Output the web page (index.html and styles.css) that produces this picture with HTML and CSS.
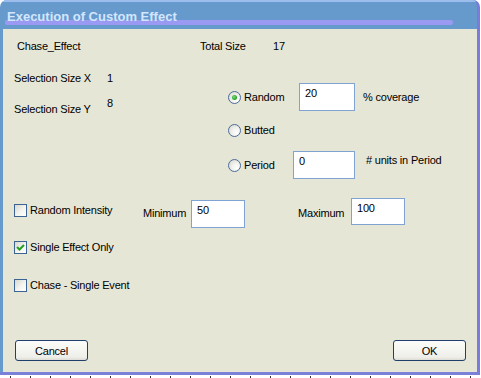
FILE: index.html
```html
<!DOCTYPE html>
<html lang="en">
<head>
  <meta charset="UTF-8">
  <title>Execution of Custom Effect</title>
  <link rel="stylesheet" href="styles.css">
</head>
<body>

  <div class="window">
    <div class="titlebar">
      <div class="title">Execution of Custom Effect</div>
      <div class="title-stripe"></div>
    </div>

    <div class="client">
      <!-- effect name and total -->
      <div class="head-row">
        <span class="effect-name">Chase_Effect</span>
        <span class="total-label">Total Size</span>
        <span>17</span>
      </div>

      <div class="middle">
        <div class="sizes">
          <div class="size-row">
            <span class="size-label">Selection Size X</span>
            <span>1</span>
          </div>
          <div class="size-row size-row-y">
            <span class="size-label">Selection Size Y</span>
            <span>8</span>
          </div>
        </div>

        <!-- distribution choice -->
        <div class="dist">
          <div class="dist-row">
            <label class="radio radio-random"><span class="radio-btn checked"></span>Random</label>
            <div class="field field-cov">20</div>
            <span class="unit">% coverage</span>
          </div>
          <div class="dist-row dist-butted">
            <label class="radio"><span class="radio-btn"></span>Butted</label>
          </div>
          <div class="dist-row dist-period">
            <label class="radio radio-period"><span class="radio-btn"></span>Period</label>
            <div class="field field-period">0</div>
            <span class="unit unit-period"># units in Period</span>
          </div>
        </div>
      </div>

      <div class="check-row intensity-row">
        <label class="check check-intensity"><span class="check-box"></span>Random Intensity</label>
        <span class="range-label">Minimum</span>
        <div class="field field-min">50</div>
        <span class="range-label range-max">Maximum</span>
        <div class="field field-max">100</div>
      </div>

      <div class="check-row single-row">
        <label class="check">
          <span class="check-box">
            <svg width="11" height="11" viewBox="0 0 11 11"><polyline points="2,5 4.5,7.5 9,3" fill="none" stroke="#21a121" stroke-width="2"/></svg>
          </span>Single Effect Only
        </label>
      </div>

      <div class="check-row chase-row">
        <label class="check"><span class="check-box"></span>Chase - Single Event</label>
      </div>

      <div class="buttons">
        <button class="btn">Cancel</button>
        <button class="btn">OK</button>
      </div>
    </div>
  </div>
  <div class="ruler"></div>

</body>
</html>
```

FILE: styles.css
```css
body {
  margin: 0;
  background: #fff;
  font-family: "Liberation Sans", Arial, sans-serif;
  font-size: 11px;
  letter-spacing: -0.2px;
  color: #000;
}

.window {
  width: 480px;
  height: 375px;
  box-sizing: border-box;
  display: flex;
  flex-direction: column;
  background: #6699cc;
  border-right: 3px solid #7b7bdb;
  border-bottom: 3px solid #7b80d8;
  border-radius: 7px 7px 0 0;
  overflow: hidden;
}

.titlebar {
  flex: none;
  height: 29px;
  box-sizing: border-box;
  border-top: 2px solid #9dbdec;
  padding: 8px 0 0 5px;
}

.title {
  position: relative;
  z-index: 1;
  padding-left: 2px;
  font-weight: bold;
  font-size: 13px;
  line-height: 13px;
  letter-spacing: 0;
  color: #d4e6ff;
}

.title-stripe {
  width: 448px;
  height: 5px;
  margin-top: -3px;
  background: #9a9af2;
  border-radius: 2px;
}

.client {
  flex: 1;
  display: flex;
  flex-direction: column;
  margin-left: 3px;
  background: #e6e6d6;
  line-height: 13px;
}

.head-row {
  display: flex;
  margin-top: 11px;
  padding-left: 14px;
}

.effect-name {
  width: 183px;
}

.total-label {
  width: 73px;
}

.middle {
  display: flex;
  margin-top: 19px;
}

.sizes {
  width: 214px;
  padding-left: 11px;
}

.size-row {
  display: flex;
  align-items: flex-start;
}

.size-label {
  width: 93px;
}

.size-row-y {
  margin-top: 12px;
}

.size-row-y .size-label {
  padding-top: 6px;
}

.dist {
  padding-top: 11px;
}

.dist-row {
  display: flex;
  align-items: center;
  height: 28px;
}

.dist-butted {
  margin-top: 5px;
}

.dist-period {
  margin-top: 7px;
}

.radio {
  display: flex;
  align-items: center;
}

.radio-random {
  width: 71px;
}

.radio-period {
  width: 65px;
}

.radio-btn {
  width: 11px;
  height: 11px;
  margin-right: 3px;
  border: 1px solid #4a6b9c;
  border-radius: 50%;
  background: radial-gradient(circle at 70% 70%, #fff 0, #f2f2ee 40%, #d6d6cf 100%);
  display: flex;
  align-items: center;
  justify-content: center;
}

.radio-btn.checked::after {
  content: "";
  width: 5px;
  height: 5px;
  border-radius: 50%;
  background: radial-gradient(circle at 40% 40%, #7ed87e 0, #21a121 70%);
}

.field {
  box-sizing: border-box;
  height: 28px;
  padding: 3px 5px;
  background: #fff;
  border: 1px solid #7fa3d3;
}

.field-cov {
  width: 56px;
}

.field-period {
  width: 62px;
}

.unit {
  margin-left: 8px;
}

.unit-period {
  align-self: flex-start;
  margin-top: 3px;
  margin-left: 11px;
}

.check-row {
  display: flex;
  align-items: flex-start;
  padding-left: 11px;
}

.intensity-row {
  margin-top: 19px;
  height: 30px;
}

.single-row {
  margin-top: 13px;
}

.chase-row {
  margin-top: 25px;
}

.check {
  display: flex;
  align-items: center;
}

.intensity-row .check {
  margin-top: 6px;
}

.check-intensity {
  width: 129px;
}

.check-box {
  box-sizing: border-box;
  width: 13px;
  height: 13px;
  margin-right: 3px;
  border: 1px solid #3b6494;
  background: linear-gradient(135deg, #d8d8d0 0, #f4f4f0 55%, #fff 100%);
  display: flex;
  align-items: center;
  justify-content: center;
}

.range-label {
  width: 48px;
  margin-top: 9px;
}

.range-max {
  width: 53px;
  margin-left: 53px;
}

.field-min {
  width: 54px;
  margin-top: 2px;
}

.field-max {
  width: 54px;
  height: 27px;
}

.buttons {
  display: flex;
  justify-content: space-between;
  margin-top: auto;
  padding: 0 11px 11px 12px;
}

.btn {
  width: 73px;
  height: 21px;
  padding: 0;
  font-family: "Liberation Sans", Arial, sans-serif;
  font-size: 11px;
  letter-spacing: -0.2px;
  color: #000;
  background: linear-gradient(#fbfbf9, #efefea 85%, #dcdcd4);
  border: 1px solid #1f3f6c;
  border-radius: 3px;
}

.ruler {
  width: 480px;
  height: 2px;
  margin-top: 1px;
  background: repeating-linear-gradient(90deg, transparent 0, transparent 10px, #333 10px, #333 11px, transparent 11px, transparent 20px);
}
```
